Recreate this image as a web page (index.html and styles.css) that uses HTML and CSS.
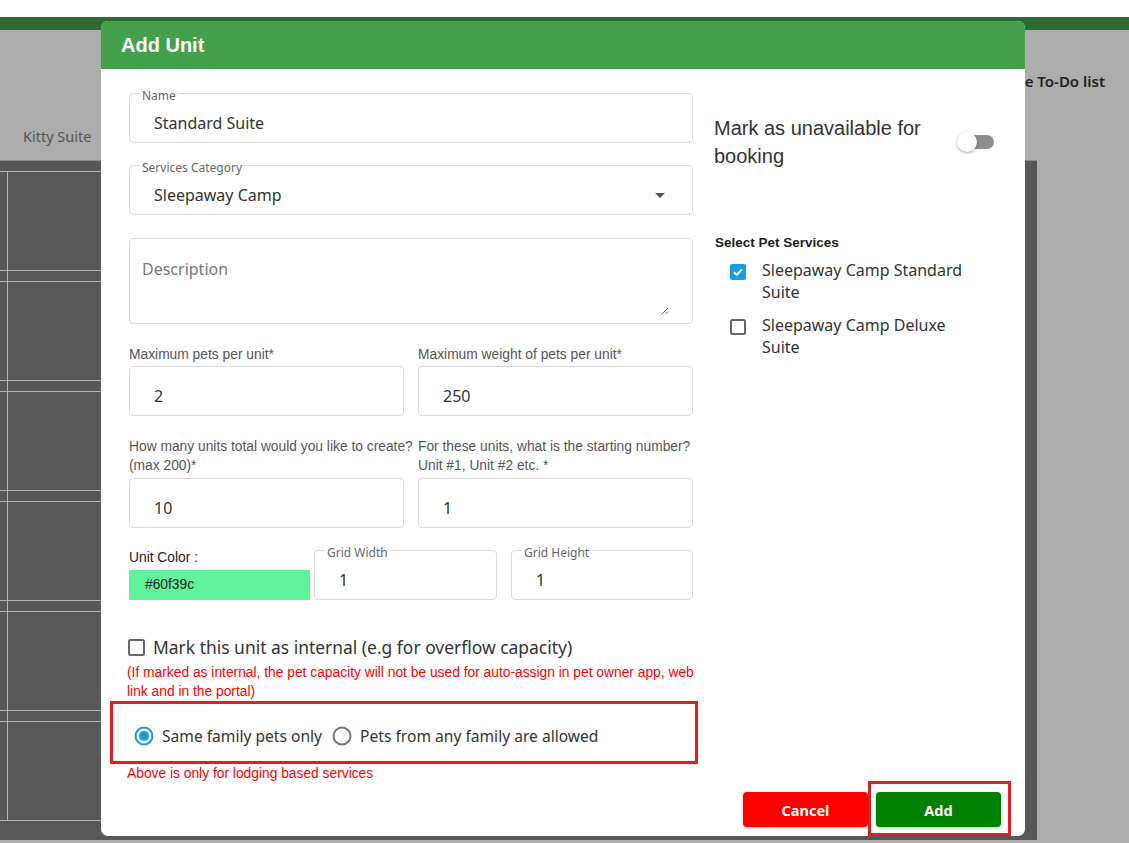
FILE: index.html
```html
<!DOCTYPE html>
<html>
<head>
<meta charset="utf-8">
<title>Add Unit</title>
<link rel="stylesheet" href="styles.css">
</head>
<body>
<div class="page">
  <div class="topbar"></div>
  <div class="greenbar"></div>
  <div class="main">
    <div class="toolbar">
      <div class="todo">Manage To-Do list</div>
      <div class="tab">Kitty Suite</div>
    </div>
    <div class="board">
      <div class="board-inner">
        <div class="board-row"></div>
        <div class="board-row"></div>
        <div class="board-row"></div>
        <div class="board-row"></div>
        <div class="board-row"></div>
        <div class="board-row"></div>
      </div>
    </div>
  </div>
</div>

<div class="modal">
  <div class="modal-header">Add Unit</div>
  <div class="modal-body">
    <div class="left-col">
      <div class="field">
        <span class="field-label">Name</span>
        <span class="field-value">Standard Suite</span>
      </div>
      <div class="field field-select">
        <span class="field-label">Services Category</span>
        <span class="field-value">Sleepaway Camp</span>
        <span class="caret"></span>
      </div>
      <div class="textarea">
        <span class="placeholder">Description</span>
        <svg class="grip" width="8" height="8" viewBox="0 0 8 8"><path d="M7 1L1 7M7 4.5L4.5 7" stroke="#555" stroke-width="1" fill="none"/></svg>
      </div>

      <div class="pair pair-one">
        <div class="pair-item">
          <div class="small-label">Maximum pets per unit*</div>
          <div class="box"><span class="num">2</span></div>
        </div>
        <div class="pair-item">
          <div class="small-label">Maximum weight of pets per unit*</div>
          <div class="box"><span class="num">250</span></div>
        </div>
      </div>

      <div class="pair pair-two">
        <div class="pair-item">
          <div class="small-label">How many units total would you like to create?<br>(max 200)*</div>
          <div class="box"><span class="num">10</span></div>
        </div>
        <div class="pair-item">
          <div class="small-label">For these units, what is the starting number?<br>Unit #1, Unit #2 etc. *</div>
          <div class="box"><span class="num">1</span></div>
        </div>
      </div>

      <div class="color-row">
        <div class="color-col">
          <div class="color-label">Unit Color :</div>
          <div class="swatch">#60f39c</div>
        </div>
        <div class="field grid-w">
          <span class="field-label">Grid Width</span>
          <span class="num">1</span>
        </div>
        <div class="field grid-h">
          <span class="field-label">Grid Height</span>
          <span class="num">1</span>
        </div>
      </div>

      <div class="internal">
        <svg width="17" height="17" viewBox="0 0 17 17"><rect x="1" y="1" width="15" height="15" rx="1.5" fill="none" stroke="#666" stroke-width="2"/></svg>
        <span>Mark this unit as internal (e.g for overflow capacity)</span>
      </div>
      <div class="red-note">(If marked as internal, the pet capacity will not be used for auto-assign in pet owner app, web link and in the portal)</div>

      <div class="family-box">
        <label class="radio">
          <svg width="20" height="20" viewBox="0 0 20 20"><circle cx="10" cy="10" r="8.5" fill="none" stroke="#1a9be6" stroke-width="2"/><circle cx="10" cy="10" r="5" fill="#1a9be6"/></svg>
          <span>Same family pets only</span>
        </label>
        <label class="radio">
          <svg width="20" height="20" viewBox="0 0 20 20"><circle cx="10" cy="10" r="8.5" fill="none" stroke="#757575" stroke-width="2"/></svg>
          <span>Pets from any family are allowed</span>
        </label>
      </div>
      <div class="red-note below">Above is only for lodging based services</div>
    </div>

    <div class="right-col">
      <div class="avail">
        <div class="avail-text">Mark as unavailable for booking</div>
        <div class="toggle"><span class="track"></span><span class="thumb"></span></div>
      </div>
      <div class="services-title">Select Pet Services</div>
      <div class="service">
        <svg width="16" height="16" viewBox="0 0 16 16"><rect width="16" height="16" rx="2" fill="#1a9be6"/><path d="M4 8.3l2.7 2.6L12 5.4" stroke="#fff" stroke-width="2" fill="none"/></svg>
        <span>Sleepaway Camp Standard Suite</span>
      </div>
      <div class="service">
        <svg width="16" height="16" viewBox="0 0 16 16"><rect x="1" y="1" width="14" height="14" rx="1.5" fill="none" stroke="#666" stroke-width="2"/></svg>
        <span>Sleepaway Camp Deluxe Suite</span>
      </div>
      <div class="footer">
        <button class="btn btn-cancel">Cancel</button>
        <div class="highlight"><button class="btn btn-add">Add</button></div>
      </div>
    </div>
  </div>
</div>
</body>
</html>
```

FILE: styles.css
```css
* { box-sizing: border-box; }
html, body { margin: 0; padding: 0; }
body {
  width: 1129px;
  height: 843px;
  overflow: hidden;
  position: relative;
  font-family: "Noto Sans", "Liberation Sans", sans-serif;
  background: #adadad;
}
.page { display: flex; flex-direction: column; height: 843px; }
.topbar { height: 17px; background: #fff; }
.greenbar { height: 13px; background: #2d6b31; }
.main { flex: 1; background: #adadad; display: flex; flex-direction: column; }
.toolbar {
  height: 130px;
  display: flex;
  flex-direction: column;
  padding-top: 41px;
}
.todo {
  align-self: flex-end;
  padding-right: 24px;
  font-size: 15px;
  line-height: 20px;
  font-weight: 600;
  color: #222;
}
.tab {
  margin-top: 35px;
  padding-left: 23px;
  font-size: 14.5px;
  line-height: 20px;
  color: #555;
}
.board {
  width: 1037px;
  height: 680px;
  background: #575757;
  border-top: 1px solid #8d8d8d;
  padding-top: 10px;
}
.board-inner {
  width: 1000px;
  background: linear-gradient(#b4b4b4, #b4b4b4) 7px 0 / 1px 100% no-repeat;
}
.board-row {
  height: 100px;
  border-top: 1px solid #b4b4b4;
  border-bottom: 1px solid #b4b4b4;
  margin-bottom: 10px;
}
.board-row:last-child { margin-bottom: 0; }

/* Modal */
.modal {
  position: absolute;
  left: 101px;
  top: 21px;
  width: 924px;
  height: 815px;
  background: #fff;
  border-radius: 7px;
  overflow: hidden;
  display: flex;
  flex-direction: column;
}
.modal-header {
  height: 48px;
  flex: none;
  background: #43a14b;
  color: #fff;
  font-family: "Liberation Sans", Arial, sans-serif;
  font-weight: bold;
  font-size: 20px;
  line-height: 48px;
  padding-left: 20px;
}
.modal-body {
  flex: 1;
  display: grid;
  grid-template-columns: 564px 1fr;
  column-gap: 21px;
  padding: 24px 14px 0 28px;
}
.left-col { display: flex; flex-direction: column; }

.field {
  position: relative;
  height: 50px;
  border: 1px solid #d9d9d9;
  border-radius: 4px;
  display: flex;
  align-items: center;
  padding: 10px 24px 0 24px;
}
.field-label {
  position: absolute;
  top: -5px;
  left: 10px;
  padding: 0 2px;
  background: #fff;
  font-size: 12px;
  line-height: 14px;
  color: #666;
}
.field-value { font-size: 16px; line-height: 22px; color: #333; }
.field-select { margin-top: 22px; }
.caret {
  margin-left: auto;
  margin-right: 3px;
  width: 0;
  height: 0;
  border-left: 5px solid transparent;
  border-right: 5px solid transparent;
  border-top: 5px solid #555;
}
.textarea {
  position: relative;
  margin-top: 23px;
  height: 86px;
  border: 1px solid #d9d9d9;
  border-radius: 4px;
  padding: 19px 12px 0;
}
.placeholder { font-size: 16px; line-height: 22px; color: #777; }
.grip { position: absolute; right: 23px; bottom: 8px; }

.pair {
  display: grid;
  grid-template-columns: 275px 275px;
  column-gap: 14px;
}
.pair-one { margin-top: 22px; }
.pair-two { margin-top: 21px; }
.pair-item { display: flex; flex-direction: column; }
.small-label {
  font-family: "Liberation Sans", Arial, sans-serif;
  font-size: 13.8px;
  line-height: 19px;
  color: #555;
  margin-bottom: 3px;
  white-space: nowrap;
}
.pair-one .small-label { line-height: 18px; margin-bottom: 2px; }
.box {
  height: 50px;
  border: 1px solid #d9d9d9;
  border-radius: 4px;
  display: flex;
  align-items: center;
  padding: 10px 24px 0;
}
.num { font-size: 16px; line-height: 22px; color: #333; }

.color-row {
  margin-top: 22px;
  display: grid;
  grid-template-columns: 181px 183px 1fr;
  column-gap: 4px;
}
.grid-h { margin-left: 10px; }
.color-col { display: flex; flex-direction: column; justify-content: flex-end; }
.color-label {
  font-family: "Liberation Sans", Arial, sans-serif;
  font-size: 13.8px;
  line-height: 16px;
  color: #222;
  margin-bottom: 4px;
}
.swatch {
  height: 30px;
  background: #60f39c;
  font-family: "Liberation Sans", Arial, sans-serif;
  font-size: 13.8px;
  line-height: 30px;
  color: #222;
  padding-left: 16px;
}

.internal {
  margin-top: 35px;
  display: flex;
  align-items: center;
  gap: 8px;
  height: 24px;
  margin-left: -1px;
  font-size: 17.45px;
  color: #333;
}
.red-note {
  margin-left: -2px;
  width: 572px;
  margin-top: 4px;
  font-family: "Liberation Sans", Arial, sans-serif;
  font-size: 13.8px;
  line-height: 19px;
  color: #f00;
}
.red-note.below { margin-top: 1px; line-height: 18px; }
.family-box {
  margin-left: -19px;
  width: 588px;
  height: 63px;
  border: 3px solid #e21d1d;
  display: flex;
  align-items: center;
  padding: 7px 0 0 21px;
  gap: 10px;
}
.radio {
  display: flex;
  align-items: center;
  gap: 8px;
  font-size: 15.6px;
  color: #333;
}

/* Right column */
.right-col { display: flex; flex-direction: column; }
.avail {
  margin-top: 21px;
  display: flex;
  align-items: center;
  justify-content: space-between;
  padding-right: 17px;
}
.avail-text {
  width: 232px;
  font-family: "Liberation Sans", Arial, sans-serif;
  font-size: 20px;
  line-height: 28px;
  color: #333;
}
.toggle { position: relative; width: 37px; height: 20px; }
.track {
  position: absolute;
  left: 3px;
  top: 3px;
  width: 34px;
  height: 14px;
  border-radius: 7px;
  background: #8e8e8e;
}
.thumb {
  position: absolute;
  left: 0;
  top: 0;
  width: 20px;
  height: 20px;
  border-radius: 50%;
  background: #fff;
  box-shadow: 0 1px 3px rgba(0,0,0,0.35);
}
.services-title {
  margin-top: 64px;
  margin-left: 1px;
  font-family: "Liberation Sans", Arial, sans-serif;
  font-weight: bold;
  font-size: 13.5px;
  line-height: 18px;
  color: #222;
}
.service {
  margin-top: 7px;
  padding-left: 16px;
  display: flex;
  align-items: flex-start;
  gap: 16px;
  font-size: 16px;
  line-height: 22px;
  color: #333;
}
.service + .service { margin-top: 11px; }
.service svg { margin-top: 5px; flex: none; }
.service span { width: 215px; }

.footer {
  margin-top: auto;
  display: flex;
  justify-content: flex-end;
  align-items: flex-start;
}
.btn {
  width: 125px;
  height: 35px;
  border: none;
  border-radius: 4px;
  color: #fff;
  font-family: "Noto Sans", sans-serif;
  font-weight: bold;
  font-size: 14.5px;
  box-shadow: 0 1px 3px rgba(0,0,0,0.25);
  padding: 0;
}
.btn-cancel { background: #fe0000; margin-top: 11px; }
.btn-add { background: #008000; display: block; }
.highlight {
  border: 3px solid #e21d1d;
  padding: 8px 7px 6px 5px;
}
```
